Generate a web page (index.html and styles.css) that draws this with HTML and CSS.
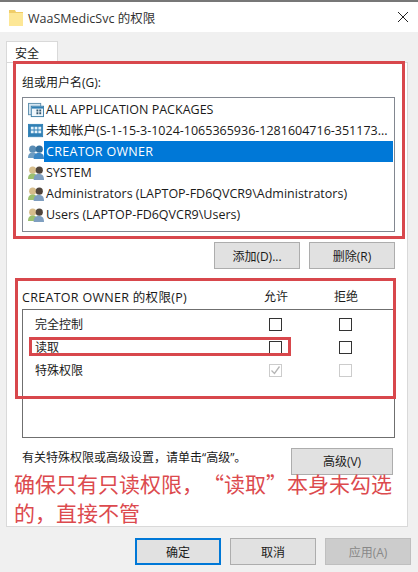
FILE: index.html
```html
<!DOCTYPE html>
<html lang="zh-CN">

<head>
  <meta charset="UTF-8" />
  <title>WaaSMedicSvc 的权限</title>
  <link rel="stylesheet" href="styles.css">
</head>

<body>
  <svg class="defs" width="0" height="0">
    <symbol id="ico-package" viewBox="0 0 17 17">
      <rect x="0.5" y="1.5" width="13" height="12" fill="#d5e6f2" stroke="#5f8fae" />
      <rect x="3.5" y="4.5" width="13" height="11" fill="#eef6fb" stroke="#3f7ea6" />
      <rect x="4" y="5" width="12" height="2" fill="#2f7fb5" />
      <path d="M9 8h2v2H9zM12 8h2v2h-2zM9 11h2v2H9zM12 11h2v2h-2z" fill="#33566f" />
    </symbol>
    <symbol id="ico-sid" viewBox="0 0 17 17">
      <rect x="0.5" y="1.5" width="15" height="13" fill="#d9ebf7" stroke="#2f7fb5" />
      <rect x="1" y="2" width="14" height="12" fill="#2f7fb5" />
      <path d="M3 4h3v3H3zM7 4h3v3H7zM11 4h3v3h-3zM7 8h3v3H7zM11 8h3v3h-3zM3 8h3v3H3z" fill="#e4f2fb" />
    </symbol>
    <symbol id="ico-owner" viewBox="0 0 17 17">
      <circle cx="5" cy="5.500" r="3.800" fill="#5b8db5" />
      <path d="M0 15c0-4.500 2-6 5-6s5 1.500 5 6z" fill="#6d9cc2" />
      <circle cx="12" cy="5.500" r="3.800" fill="#336f9e" />
      <path d="M6 16c0-5 2-6.500 5.500-6.500S17 11 17 16z" fill="#3a86c4" />
    </symbol>
    <symbol id="ico-group" viewBox="0 0 17 17">
      <circle cx="5" cy="5.500" r="3.800" fill="#d6bd8c" />
      <path d="M0 15c0-4.500 2-6 5-6s5 1.500 5 6z" fill="#9cc070" />
      <circle cx="12" cy="5.500" r="3.800" fill="#50453c" />
      <path d="M6 16c0-5 2-6.500 5.500-6.500S17 11 17 16z" fill="#7f9fc0" />
    </symbol>
  </svg>

  <div class="window">
    <header class="titlebar">
      <svg class="folder" width="14" height="17" viewBox="0 0 14 17">
        <path d="M0 1h6l1 2h7v14H0z" fill="#f0cd68" />
        <rect x="0" y="4" width="14" height="13" fill="#fde796" />
      </svg>
      <span class="title">WaaSMedicSvc 的权限</span>
      <svg class="close" width="10" height="10" viewBox="0 0 10 10">
        <path d="M0 0l10 10M10 0L0 10" stroke="#222" stroke-width="1" fill="none" />
      </svg>
    </header>

    <div class="tabs">
      <div class="tab">安全</div>
    </div>

    <main class="panel">
      <div class="label">组或用户名(G):</div>
      <ul class="list">
        <li class="row"><svg class="ico"><use href="#ico-package" /></svg><span class="name">ALL APPLICATION PACKAGES</span></li>
        <li class="row"><svg class="ico"><use href="#ico-sid" /></svg><span class="name">未知帐户(S-1-15-3-1024-1065365936-1281604716-351173...</span></li>
        <li class="row selected"><svg class="ico"><use href="#ico-owner" /></svg><span class="name">CREATOR OWNER</span></li>
        <li class="row"><svg class="ico"><use href="#ico-group" /></svg><span class="name">SYSTEM</span></li>
        <li class="row"><svg class="ico"><use href="#ico-group" /></svg><span class="name">Administrators (LAPTOP-FD6QVCR9\Administrators)</span></li>
        <li class="row"><svg class="ico"><use href="#ico-group" /></svg><span class="name">Users (LAPTOP-FD6QVCR9\Users)</span></li>
      </ul>

      <div class="list-actions">
        <button class="btn">添加(D)...</button>
        <button class="btn">删除(R)</button>
      </div>

      <div class="perm-head">
        <span class="perm-title">CREATOR OWNER 的权限(P)</span>
        <span class="col">允许</span>
        <span class="col">拒绝</span>
      </div>
      <div class="perm-box">
        <div class="perm-row">
          <span class="perm-name">完全控制</span>
          <span class="col"><i class="check"></i></span>
          <span class="col"><i class="check"></i></span>
        </div>
        <div class="perm-row">
          <span class="perm-name">读取</span>
          <span class="col"><i class="check"></i></span>
          <span class="col"><i class="check"></i></span>
        </div>
        <div class="perm-row">
          <span class="perm-name">特殊权限</span>
          <span class="col">
            <i class="check disabled">
              <svg width="11" height="11" viewBox="0 0 11 11">
                <path d="M1.500 5.500l3 3 5-7" stroke="#b5b5b5" stroke-width="1.300" fill="none" />
              </svg>
            </i>
          </span>
          <span class="col"><i class="check disabled"></i></span>
        </div>
      </div>

      <div class="info">
        <span>有关特殊权限或高级设置，请单击“高级”。</span>
        <button class="btn btn-advanced">高级(V)</button>
      </div>
    </main>

    <footer class="footer">
      <button class="btn btn-default">确定</button>
      <button class="btn">取消</button>
      <button class="btn btn-off">应用(A)</button>
    </footer>

    <!-- 红色标注 -->
    <div class="mark mark-users"></div>
    <div class="mark mark-perms"></div>
    <div class="mark mark-read"></div>
    <p class="note">确保只有只读权限，“读取”本身未勾选<br>的，直接不管</p>
  </div>
</body>

</html>
```

FILE: styles.css
```css
* {
  box-sizing: border-box;
}

body {
  margin: 0;
  background: #f0f0f0;
  color: #1a1a1a;
  font-family: "Open Sans", "Noto Sans CJK SC", sans-serif;
  font-size: 12px;
}

.defs {
  position: absolute;
}

.window {
  position: relative;
  display: flex;
  flex-direction: column;
  width: 418px;
  height: 572px;
  overflow: hidden;
  border-top: 2px solid #777;
}

.titlebar {
  display: flex;
  align-items: center;
  height: 30px;
  padding: 0 10px 0 9px;
  background: #fff;
  font-size: 12.5px;
  color: #333;
}

.folder {
  margin-right: 5px;
}

.title {
  flex: 1;
}

.tabs {
  display: flex;
  height: 30px;
  padding: 9px 0 0 6px;
}

.tab {
  width: 52px;
  height: 22px;
  padding: 2px 0 0 8px;
  background: #fff;
  border: 1px solid #d9d9d9;
  border-bottom: none;
  font-size: 12px;
}

.panel {
  height: 465px;
  margin: 0 10px 0 6px;
  padding: 10px 12px 0 15px;
  background: #fff;
  border: 1px solid #d9d9d9;
  border-top: 1px solid #d9d9d9;
}

.label {
  height: 20px;
  line-height: 20px;
}

.list {
  height: 135px;
  margin: 4px 0 0;
  padding: 1px 1px 0 5px;
  list-style: none;
  border: 1px solid #828790;
}

.row {
  display: flex;
  align-items: center;
  height: 21px;
  white-space: nowrap;
  font-size: 12.5px;
}

.ico {
  width: 16px;
  height: 16px;
  flex: none;
}

.name {
  flex: 1;
  padding-left: 2px;
  line-height: 21px;
  height: 21px;
}

.row.selected .name {
  background: #0078d7;
  color: #fff;
  letter-spacing: 0.3px;
}

.list-actions {
  display: flex;
  justify-content: flex-end;
  gap: 9px;
  margin-top: 10px;
}

.btn {
  width: 86px;
  height: 27px;
  padding: 0;
  background: #e1e1e1;
  border: 1px solid #adadad;
  color: #1a1a1a;
  font-family: inherit;
  font-size: 12px;
}

.perm-head,
.perm-row {
  display: grid;
  grid-template-columns: 1fr 70px 70px;
  align-items: center;
  padding-right: 14px;
}

.perm-head {
  height: 20px;
  margin-top: 17px;
}

.perm-title {
  font-size: 12.5px;
  letter-spacing: 0.3px;
}

.col {
  display: flex;
  justify-content: center;
}

.perm-box {
  height: 129px;
  margin-top: 3px;
  padding: 3px 0 0 12px;
  border: 1px solid #6f6f6f;
}

.perm-row {
  height: 23px;
}

.perm-name {
  margin-top: -2px;
}

.check {
  display: flex;
  align-items: center;
  justify-content: center;
  width: 13px;
  height: 13px;
  border: 1px solid #333;
}

.check.disabled {
  border-color: #cccccc;
}

.info {
  display: flex;
  justify-content: space-between;
  align-items: flex-start;
  margin-top: 10px;
  padding-right: 2px;
}

.btn-advanced {
  width: 102px;
  padding-bottom: 1px;
}

.footer {
  display: flex;
  justify-content: flex-end;
  gap: 9px;
  padding: 11px 7px 0 0;
}

.btn-default {
  border: 2px solid #0078d7;
}

.btn-off {
  background: #cccccc;
  border-color: #bfbfbf;
  color: #888;
}

.mark {
  position: absolute;
  border: 3px solid #d8474c;
}

.mark-users {
  left: 13px;
  top: 59px;
  width: 392px;
  height: 178px;
}

.mark-perms {
  left: 15px;
  top: 276px;
  width: 381px;
  height: 121px;
}

.mark-read {
  left: 29px;
  top: 335px;
  width: 262px;
  height: 19px;
}

.note {
  position: absolute;
  left: 14px;
  top: 467px;
  margin: 0;
  color: #dc4a4e;
  font-family: "Noto Sans CJK SC", sans-serif;
  font-size: 21px;
  line-height: 29px;
  white-space: nowrap;
  text-spacing-trim: space-all;
}
```
